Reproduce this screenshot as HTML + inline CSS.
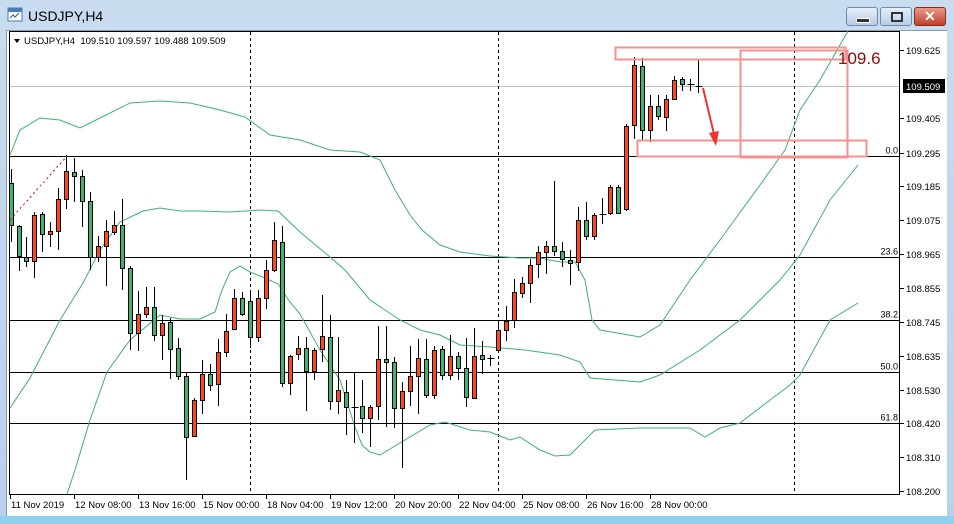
<!DOCTYPE html>
<html><head><meta charset="utf-8">
<style>
html,body{margin:0;padding:0;width:954px;height:524px;overflow:hidden;background:#bcd3ea;font-family:"Liberation Sans",sans-serif}
#win{position:absolute;left:0;top:0;width:954px;height:524px;background:linear-gradient(#c9dcef,#b9d1ea)}
#title{position:absolute;left:28px;top:8px;font-size:14px;color:#000}
.btn{position:absolute;top:7px;height:17px;border:1px solid #6d8bb0;border-radius:3px;background:linear-gradient(#e6eef8,#b7cce4)}
#panel{position:absolute;left:6px;top:30px;width:940px;height:485px;background:#fff;border-left:1px solid #8a9bb0;border-top:1px solid #8a9bb0}
#bot{position:absolute;left:0;top:516px;width:954px;height:8px;background:#8fd1ef}
</style></head><body>
<div id="win">
<svg style="position:absolute;left:7px;top:7px" width="16" height="16"><rect x="1" y="1" width="14" height="13" fill="#fff" stroke="#4a7bb5"/><rect x="1" y="1" width="14" height="4" fill="#4a7bb5"/><path d="M3 11 L6 8 L8 10 L12 6" stroke="#2b5a9a" fill="none"/></svg>
<div id="title">USDJPY,H4</div>
<div class="btn" style="left:846px;width:30px"><div style="position:absolute;left:9px;top:10px;width:12px;height:3px;background:#333;border:1px solid #fff"></div></div>
<div class="btn" style="left:880px;width:30px"><div style="position:absolute;left:10px;top:4px;width:8px;height:6px;border:2px solid #333"></div></div>
<div class="btn" style="left:914px;width:30px;background:linear-gradient(#e79a8a,#c0412c);border-color:#8a2a1c"><div style="position:absolute;left:9px;top:0px;color:#fff;font-weight:bold;font-size:14px">✕</div></div>
<div id="panel"></div>
<div id="bot"></div>
<svg id="c" style="position:absolute;left:0;top:0" width="954" height="524" font-family="Liberation Sans, sans-serif"></svg>
</div>
<script>
var s='';
function L(x1,y1,x2,y2,c,w,d){s+='<line x1="'+x1+'" y1="'+y1+'" x2="'+x2+'" y2="'+y2+'" stroke="'+c+'" stroke-width="'+(w||1)+'"'+(d?' stroke-dasharray="'+d+'"':'')+' shape-rendering="crispEdges"/>';}
function T(x,y,t,sz,c,a){s+='<text x="'+x+'" y="'+y+'" font-size="'+sz+'" fill="'+(c||'#000')+'"'+(a?' text-anchor="'+a+'"':'')+'>'+t+'</text>';}
L(9.5,31,9.5,495,'#000');L(9,494.5,900,494.5,'#000');L(899.5,31,899.5,495,'#000');L(9,31.5,900,31.5,'#000');
L(10,86.5,899,86.5,'#c0c0c0');
[250.5,498.5,794.5].forEach(function(x){L(x,32,x,494,'#000',1,'3,3');});
var fib=[[156.5,'0.0'],[257.5,'23.6'],[320.5,'38.2'],[372.5,'50.0'],[423.5,'61.8']];
fib.forEach(function(f){L(10,f[0],899,f[0],'#000');T(898,f[0]-3,f[1],9,'#000','end');});
var bands=[
[[10,155],[20,130],[40,118],[60,120],[80,128],[100,118],[130,103],[160,101],[190,103],[220,110],[245,117],[270,135],[300,140],[330,150],[360,152],[380,160],[395,190],[410,215],[422,230],[440,245],[460,252],[490,256],[520,258],[540,258],[560,262],[575,262],[585,280],[592,320],[600,330],[640,337],[660,325],[690,280],[720,240],[760,185],[785,150],[800,110],[820,80],[848,31]],
[[10,408],[30,378],[60,320],[83,283],[100,250],[120,222],[143,211],[160,208],[180,211],[200,211],[230,212],[260,210],[278,211],[300,232],[330,257],[345,270],[370,300],[400,320],[420,330],[440,335],[460,345],[490,347],[525,350],[560,355],[580,362],[590,378],[640,382],[660,375],[700,350],[740,320],[780,280],[800,255],[830,200],[858,165]],
[[67,494],[75,470],[90,420],[107,372],[130,340],[160,315],[180,319],[200,319],[215,312],[222,290],[230,272],[240,266],[250,272],[265,278],[278,284],[290,302],[300,314],[320,350],[340,380],[355,427],[362,445],[370,452],[380,455],[400,443],[430,425],[445,422],[470,430],[490,432],[510,440],[520,437],[540,450],[555,456],[570,455],[585,440],[595,430],[640,428],[690,428],[705,437],[720,428],[740,423],[770,400],[790,385],[800,375],[830,320],[858,303]]];
bands.forEach(function(b){s+='<polyline fill="none" stroke="#3cb371" stroke-width="1" points="'+b.map(function(p){return p.join(',')}).join(' ')+'"/>';});
var C=[[11,183,225,169,242,'g'],[19,226,256,225,271,'g'],[26,257,261,237,267,'g'],[34,215,261,212,278,'o'],[42,214,234,212,252,'g'],[50,231,234,222,247,'o'],[58,199,231,188,250,'o'],[66,171,199,155,209,'o'],[74,172,176,158,202,'g'],[82,176,201,170,227,'g'],[90,201,257,192,270,'g'],[98,246,257,236,262,'o'],[106,231,246,220,286,'o'],[114,225,232,211,235,'o'],[122,225,268,199,290,'g'],[130,268,333,266,350,'g'],[138,314,333,291,351,'o'],[146,307,314,287,318,'o'],[154,307,335,287,341,'g'],[162,323,335,315,360,'o'],[170,322,349,318,379,'g'],[178,348,376,338,380,'g'],[186,376,437,373,480,'g'],[194,400,436,398,437,'o'],[202,374,400,360,414,'o'],[210,374,385,364,391,'g'],[218,352,384,339,406,'o'],[226,331,352,314,357,'o'],[234,298,329,289,329,'o'],[242,298,314,292,316,'g'],[250,301,337,290,348,'g'],[258,298,337,290,342,'o'],[266,270,298,260,309,'o'],[274,240,270,222,272,'o'],[282,242,383,226,387,'g'],[290,356,383,355,395,'o'],[298,348,354,336,360,'o'],[306,348,371,337,411,'g'],[314,350,371,348,380,'o'],[322,336,349,295,362,'o'],[330,337,401,315,410,'g'],[338,390,401,337,414,'o'],[346,392,407,380,435,'g'],[354,407,407,373,443,'d'],[362,406,418,380,433,'g'],[370,407,418,405,447,'o'],[378,359,406,326,420,'o'],[386,359,362,326,427,'g'],[394,362,408,357,428,'g'],[402,391,408,382,468,'o'],[410,376,391,346,406,'o'],[418,358,376,339,414,'o'],[426,359,395,339,398,'g'],[434,350,395,346,399,'o'],[442,349,375,346,380,'g'],[450,356,375,335,380,'o'],[458,356,368,352,380,'g'],[466,368,397,338,407,'g'],[474,356,398,328,399,'o'],[482,355,359,341,374,'g'],[490,358,358,355,366,'d'],[498,330,350,320,350,'o'],[506,321,330,306,341,'o'],[514,292,320,279,328,'o'],[522,283,293,277,298,'o'],[530,265,283,259,303,'o'],[538,252,264,246,278,'o'],[546,246,252,241,274,'o'],[554,246,251,181,256,'g'],[562,251,259,242,267,'g'],[570,260,263,250,285,'g'],[578,220,262,207,271,'o'],[586,220,236,202,240,'g'],[594,215,236,213,240,'o'],[602,214,214,198,224,'d'],[610,187,213,185,215,'o'],[618,187,213,185,214,'g'],[626,126,209,124,211,'o'],[634,65,125,57,139,'o'],[642,66,130,58,140,'g'],[650,106,130,95,142,'o'],[658,106,116,95,120,'g'],[666,99,117,95,131,'o'],[674,80,99,76,100,'o'],[682,79,84,77,91,'g'],[690,84,84,79,91,'d'],[698,86,86,59,93,'d']];
C.forEach(function(c){var x=c[0]+0.5;L(x,c[3],x,c[4],'#000');
 if(c[5]=='d'||c[2]-c[1]<1){L(x-3,c[1]+0.5,x+4,c[1]+0.5,'#000');}
 else s+='<rect x="'+(c[0]-2+0.5)+'" y="'+(c[1]+0.5)+'" width="4" height="'+(c[2]-c[1])+'" fill="'+(c[5]=='o'?'#ff4a0a':'#3cb371')+'" stroke="#000" stroke-width="1"/>';});
L(10,220,67,156,'#ff0000',1,'2,3');
s+='<rect x="615.5" y="47.5" width="230" height="12" fill="none" stroke="#f79090" stroke-width="2"/>';
s+='<rect x="740.5" y="50.5" width="107" height="107" fill="none" stroke="#f79090" stroke-width="2"/>';
s+='<rect x="637.5" y="140.5" width="229" height="16" fill="none" stroke="#f79090" stroke-width="2"/>';
s+='<line x1="703" y1="88" x2="714" y2="134" stroke="#ee3333" stroke-width="2"/><polygon points="709,133 719,131 716,146" fill="#ee3333"/>';
T(838,64,'109.6',17,'#8b0a0a');
s+='<polygon points="14,39 20,39 17,43" fill="#000"/>';
T(24,44,'USDJPY,H4&#160;&#160;109.510 109.597 109.488 109.509',9.5,'#000');
var P=[[50,'109.625'],[118,'109.405'],[153,'109.295'],[186,'109.185'],[220,'109.075'],[254,'108.965'],[288,'108.855'],[322,'108.745'],[356,'108.635'],[390,'108.530'],[423,'108.420'],[457,'108.310'],[491,'108.200']];
P.forEach(function(p){L(900,p[0]+0.5,904,p[0]+0.5,'#000');T(906,p[0]+4,p[1],9.5,'#000');});
s+='<rect x="903" y="79" width="42" height="14" fill="#000"/>';T(906,90,'109.509',9.5,'#fff');
var D=['11 Nov 2019','12 Nov 08:00','13 Nov 16:00','15 Nov 00:00','18 Nov 04:00','19 Nov 12:00','20 Nov 20:00','22 Nov 04:00','25 Nov 08:00','26 Nov 16:00','28 Nov 00:00'];
D.forEach(function(d,i){var x=10+64*i;L(x+0.5,495,x+0.5,499,'#000');T(x+1,508,d,9.5,'#000');});
document.getElementById('c').innerHTML=s;
</script>
</body></html>
